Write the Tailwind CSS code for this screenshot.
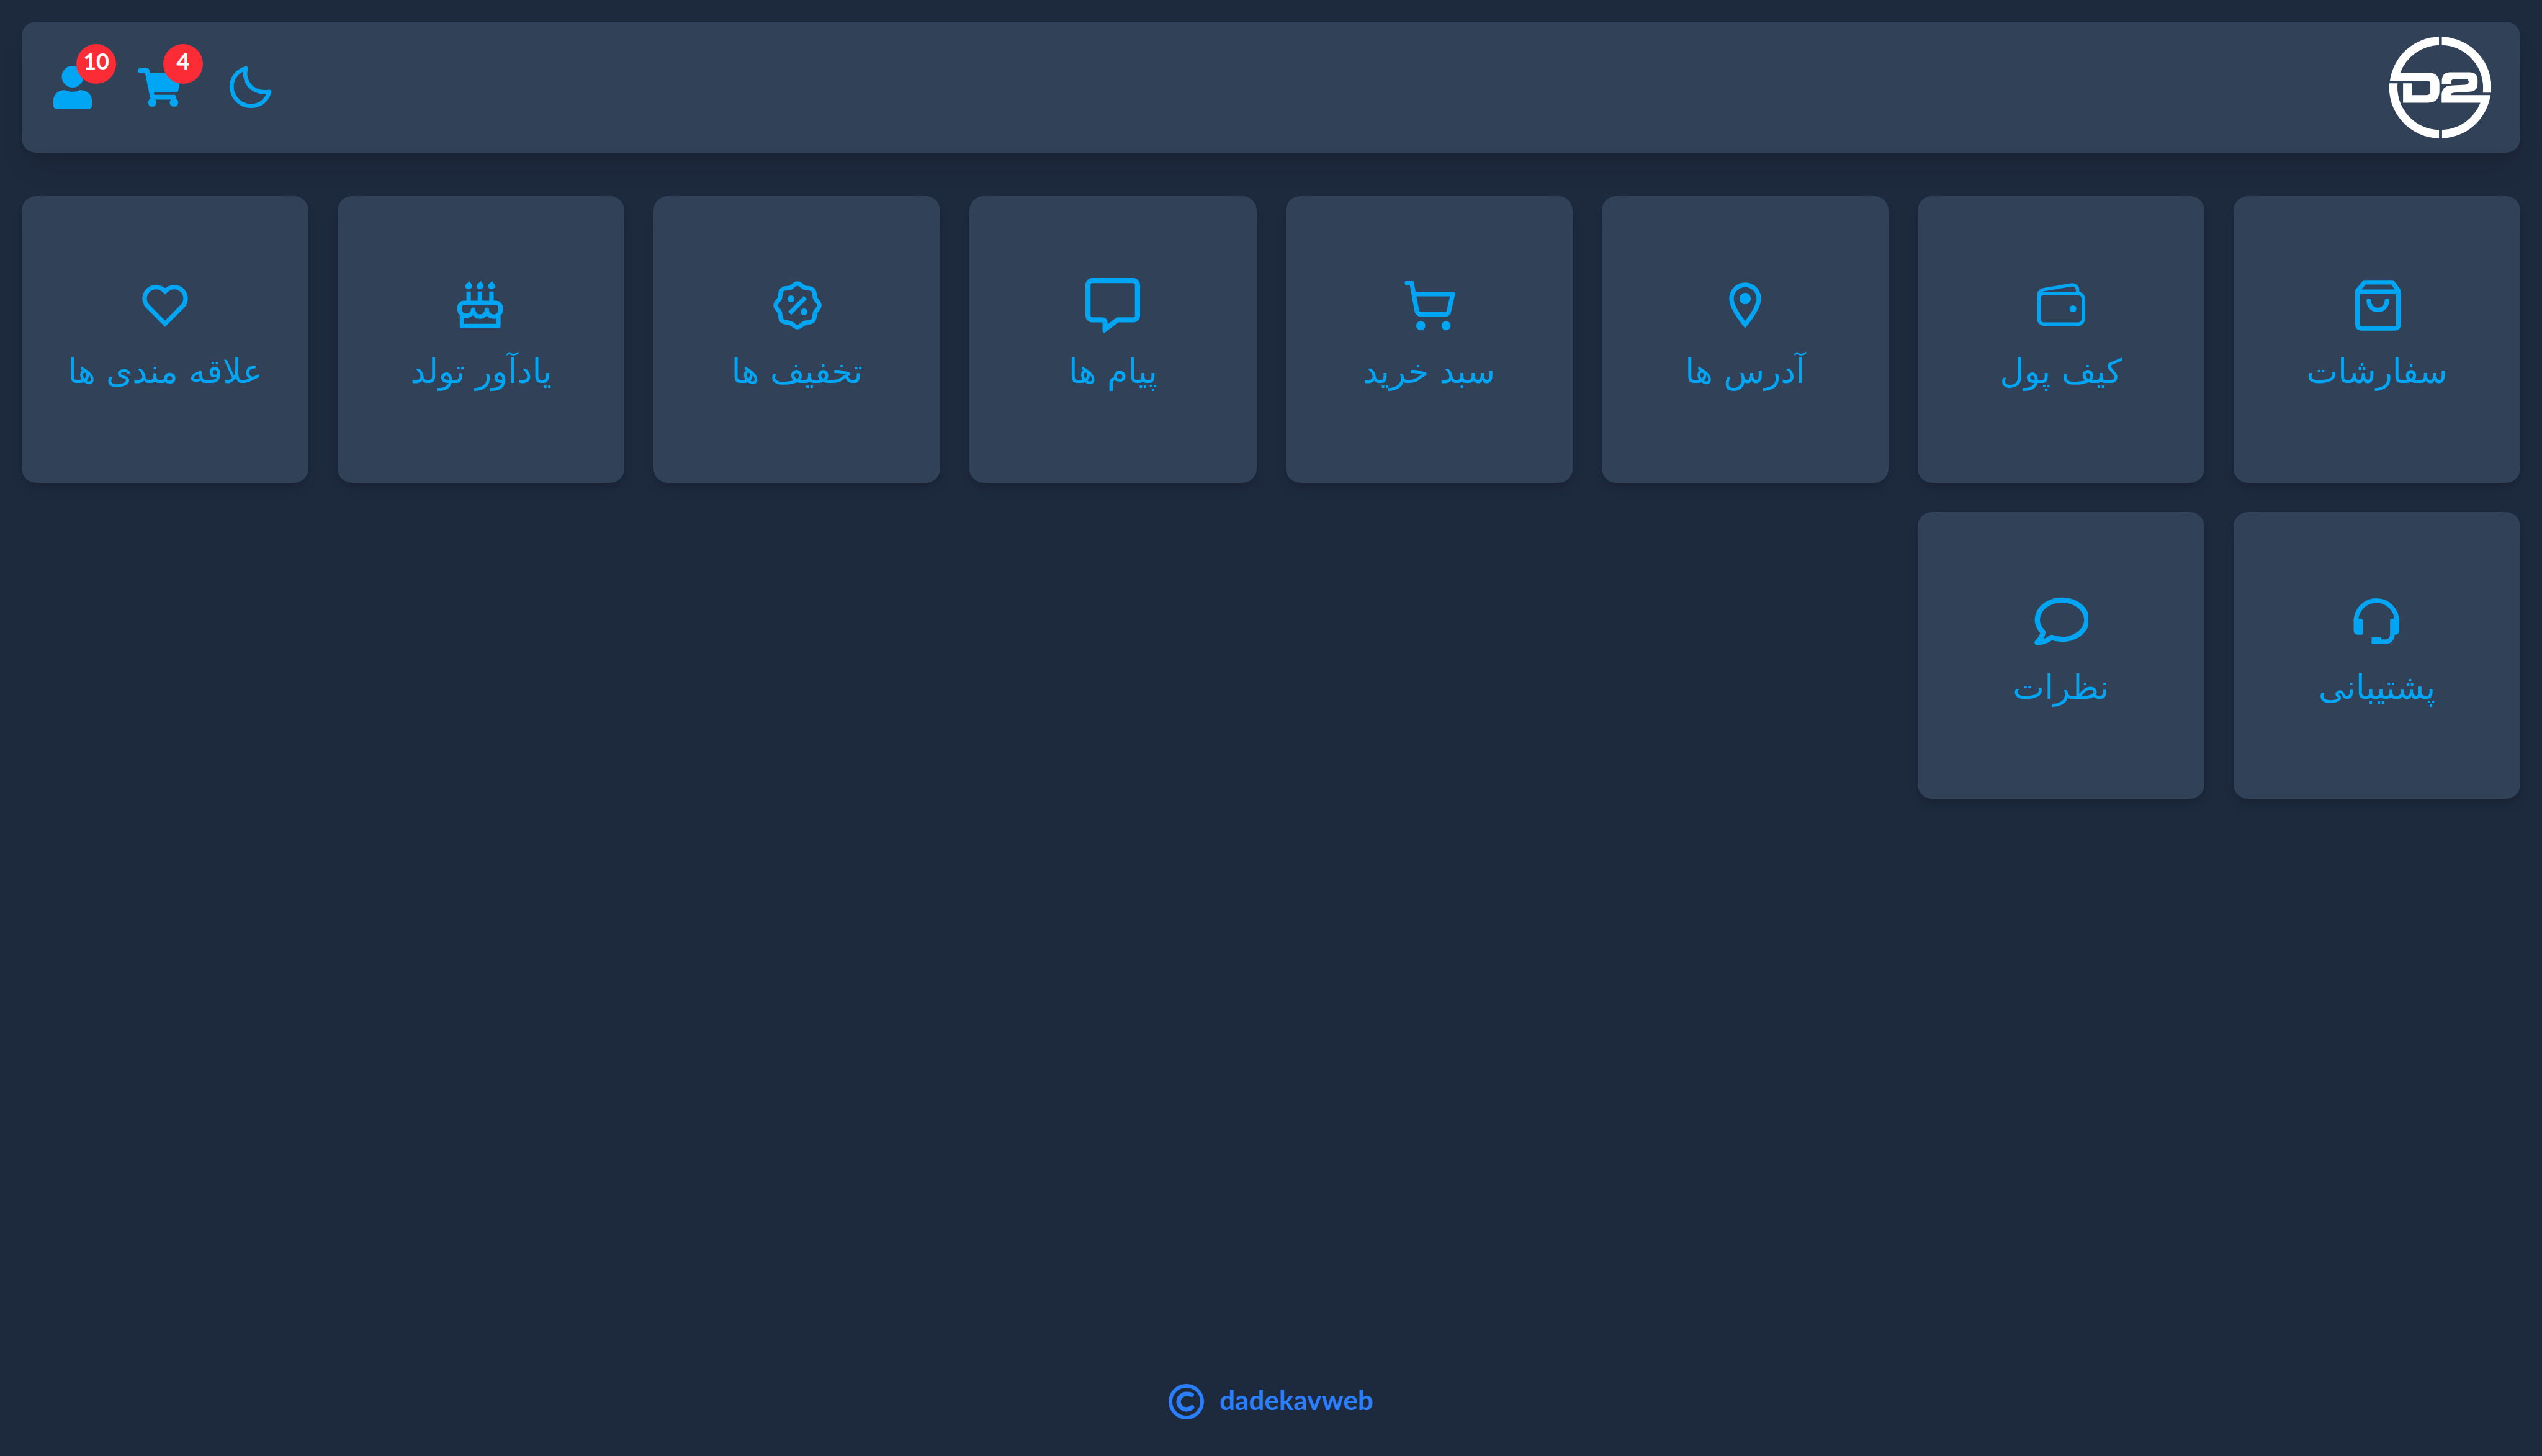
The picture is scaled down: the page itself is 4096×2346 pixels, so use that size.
<!DOCTYPE html>
<html lang="fa" dir="rtl">
<head>
<meta charset="utf-8">
<title>dadekavweb</title>
<script src="https://cdn.jsdelivr.net/npm/@tailwindcss/browser@4"></script>
</head>
<body class="flex min-h-screen flex-col bg-slate-800 p-[35px] pb-[59px] font-['DejaVu_Sans',sans-serif] text-sky-500">

<header class="flex h-[211px] items-center justify-between rounded-[23px] bg-slate-700 px-[47px] shadow-[0_29px_44px_-9px_rgba(0,0,0,0.1),0_12px_18px_-12px_rgba(0,0,0,0.1)]">
  <a href="#" aria-label="D2">
    <svg class="size-[164px] text-white" viewBox="204 180 504 504" fill="currentColor">
      <path d="M450 181A251 251 0 0 0 207 398H390Q407 398 407 415V450Q407 470 388 470H315V411H272V507H395Q452 507 452 450V415Q452 359 400 359H258A211 211 0 0 1 450 222Z"/>
      <path d="M204 411A251 251 0 0 0 450 683V642A211 211 0 0 1 245 411Z"/>
      <path d="M464 181A251 251 0 0 1 708 457H667A211 211 0 0 0 464 222Z"/>
      <path d="M464 414V400Q464 357 505 357H600Q641 357 641 395V415Q641 450 600 453L525 457Q508 458 508 470H705A251 251 0 0 1 465 683V642A211 211 0 0 0 655 507H463V470Q463 425 510 422L580 418Q597 417 597 405Q597 390 580 390H530Q510 390 510 405V414Z"/>
    </svg>
  </a>
  <nav class="flex items-center gap-[70px]">
    <button type="button" aria-label="حالت شب">
      <svg class="size-[82px]" viewBox="-29 -21 562 562" fill="none" stroke="currentColor" stroke-width="46" stroke-linecap="round" stroke-linejoin="round"><path d="M208 48C110 76 48 155 48 248c0 119 97 216 216 216C360 464 440 400 464 307C350 325 245 280 208 170C195 130 195 85 208 48Z"/></svg>
    </button>
    <a href="#" class="relative" aria-label="سبد خرید">
      <svg class="size-[70px]" viewBox="684 324 216 216" fill="currentColor">
        <path d="M736 360H902L885 448Q883 456 876 456H760Z"/>
        <path d="M696 348H730L757 480H864" fill="none" stroke="currentColor" stroke-width="24" stroke-linecap="round" stroke-linejoin="round"/>
        <circle cx="756" cy="507" r="21"/><circle cx="864" cy="507" r="21"/>
      </svg>
      <span class="absolute -top-[35px] left-[41px] flex size-[64px] justify-center rounded-full bg-red-500 font-['Lato',sans-serif] text-[36px] leading-[54px] font-bold text-white">4</span>
    </a>
    <a href="#" class="relative" aria-label="حساب کاربری">
      <svg class="size-[70px]" viewBox="252 324 216 216" fill="currentColor">
        <circle cx="360" cy="378" r="54"/>
        <path d="M264 500C264 465 288 445 320 445C332 445 335 453 360 453C385 453 388 445 400 445C432 445 456 465 456 500V520Q456 540 436 540H284Q264 540 264 520Z"/>
      </svg>
      <span class="absolute -top-[35px] left-[41px] flex size-[64px] justify-center rounded-full bg-red-500 font-['Lato',sans-serif] text-[36px] leading-[54px] font-bold text-white">10</span>
    </a>
  </nav>
</header>

<main class="mt-[70px] grid grid-cols-8 gap-[47px] text-[54px] leading-[80px] whitespace-nowrap">
  <a href="#" class="flex aspect-square flex-col items-center justify-center gap-[23px] rounded-[23px] bg-slate-700 shadow-[0_12px_18px_-3px_rgba(0,0,0,0.1),0_6px_12px_-6px_rgba(0,0,0,0.1)]">
    <svg class="size-[88px]" viewBox="0 0 90 90" fill="none" stroke="currentColor" stroke-width="7.500" stroke-linejoin="round" stroke-linecap="round"><path d="M24.500 7H70.500L80.500 21V76Q80.500 83 73.500 83H20Q13 83 13 76V21ZM13 22.700H80.500M31.500 37.500a15 15 0 0 0 30 0"/></svg>
    <span class="pb-2">سفارشات</span>
  </a>
  <a href="#" class="flex aspect-square flex-col items-center justify-center gap-[23px] rounded-[23px] bg-slate-700 shadow-[0_12px_18px_-3px_rgba(0,0,0,0.1),0_6px_12px_-6px_rgba(0,0,0,0.1)]">
    <svg class="size-[88px]" viewBox="0 0 512 512" fill="none" stroke="currentColor" stroke-width="32" stroke-linejoin="round"><rect x="48" y="144" width="416" height="288" rx="48"/><path d="M411.360 144v-30A50 50 0 0 0 352 64.900L88.640 109.850A50 50 0 0 0 48 159v49"/><circle cx="368" cy="288" r="32" fill="currentColor" stroke="none"/></svg>
    <span class="pb-2">کیف پول</span>
  </a>
  <a href="#" class="flex aspect-square flex-col items-center justify-center gap-[23px] rounded-[23px] bg-slate-700 shadow-[0_12px_18px_-3px_rgba(0,0,0,0.1),0_6px_12px_-6px_rgba(0,0,0,0.1)]">
    <svg class="size-[88px]" viewBox="0 0 24 24" fill="currentColor"><path d="M12 2C8.130 2 5 5.130 5 9c0 5.250 7 13 7 13s7-7.750 7-13c0-3.870-3.130-7-7-7zM7 9c0-2.760 2.240-5 5-5s5 2.240 5 5c0 2.880-2.880 7.190-5 9.880C9.920 16.210 7 11.850 7 9z"/><circle cx="12" cy="9" r="2.500"/></svg>
    <span class="pb-2">آدرس ها</span>
  </a>
  <a href="#" class="flex aspect-square flex-col items-center justify-center gap-[23px] rounded-[23px] bg-slate-700 shadow-[0_12px_18px_-3px_rgba(0,0,0,0.1),0_6px_12px_-6px_rgba(0,0,0,0.1)]">
    <svg class="size-[88px]" viewBox="0 0 90 90" fill="currentColor"><path d="M8.200 7.800H16L24.500 54Q26 60 32 60H70.500Q76.500 60 77.500 54L83.700 26.300H20" fill="none" stroke="currentColor" stroke-width="7.500" stroke-linejoin="round" stroke-linecap="round"/><circle cx="31" cy="78.500" r="7.600"/><circle cx="72.700" cy="78.500" r="7.600"/></svg>
    <span class="pb-2">سبد خرید</span>
  </a>
  <a href="#" class="flex aspect-square flex-col items-center justify-center gap-[23px] rounded-[23px] bg-slate-700 shadow-[0_12px_18px_-3px_rgba(0,0,0,0.1),0_6px_12px_-6px_rgba(0,0,0,0.1)]">
    <svg class="size-[88px]" viewBox="0 0 512 512" fill="currentColor"><path d="M160 368c26.500 0 48 21.500 48 48v16l72.500-54.400c8.300-6.200 18.400-9.600 28.800-9.600H448c8.800 0 16-7.200 16-16V64c0-8.800-7.200-16-16-16H64c-8.800 0-16 7.200-16 16V352c0 8.800 7.200 16 16 16h96zm48 124l-.2 .2-5.100 3.800-17.100 12.800c-4.800 3.600-11.300 4.200-16.800 1.500s-8.800-8.200-8.800-14.300V416H64c-35.300 0-64-28.700-64-64V64C0 28.700 28.700 0 64 0H448c35.300 0 64 28.700 64 64V352c0 35.300-28.700 64-64 64H309.300L208 492z"/></svg>
    <span class="pb-2">پیام ها</span>
  </a>
  <a href="#" class="flex aspect-square flex-col items-center justify-center gap-[23px] rounded-[23px] bg-slate-700 shadow-[0_12px_18px_-3px_rgba(0,0,0,0.1),0_6px_12px_-6px_rgba(0,0,0,0.1)]">
    <svg class="size-[88px]" viewBox="42 45 270 270" fill="none" stroke="currentColor" stroke-width="22"><path d="M180 72C194 72 202 86 214 92C226 98 245 92 256 104C268 115 262 134 268 146C274 158 288 166 288 180C288 194 274 202 268 214C262 226 268 245 256 256C245 268 226 262 214 268C202 274 194 288 180 288C166 288 158 274 146 268C134 262 115 268 104 256C92 245 98 226 92 214C86 202 72 194 72 180C72 166 86 158 92 146C98 134 92 115 104 104C115 92 134 98 146 92C158 86 166 72 180 72ZM142 219L219 141"/><circle cx="148" cy="148" r="17" fill="currentColor" stroke="none"/><circle cx="212" cy="212" r="17" fill="currentColor" stroke="none"/></svg>
    <span class="pb-2">تخفیف ها</span>
  </a>
  <a href="#" class="flex aspect-square flex-col items-center justify-center gap-[23px] rounded-[23px] bg-slate-700 shadow-[0_12px_18px_-3px_rgba(0,0,0,0.1),0_6px_12px_-6px_rgba(0,0,0,0.1)]">
    <svg class="size-[88px]" viewBox="60 45 270 270" fill="currentColor">
      <path d="M137 57C141 68 151 73 151 84a17 17 0 0 1-34 0C117 72 135 70 137 57ZM193 57C197 68 207 73 207 84a17 17 0 0 1-34 0C173 72 191 70 193 57ZM249 57C253 68 264 73 264 84a17 17 0 0 1-34 0C230 72 247 70 249 57ZM123 112h22v50h-22ZM179 112h22v50h-22ZM236 112h22v50h-22Z"/>
      <path d="M89 202a34 34 0 0 0 67.500 0a33.700 33.700 0 0 0 67.500 0a34 34 0 0 0 68 0V190a22 22 0 0 0-22-22H111a22 22 0 0 0-22 22ZM101 232V282H281V232" fill="none" stroke="currentColor" stroke-width="22" stroke-linejoin="round"/>
    </svg>
    <span class="pb-2">یادآور تولد</span>
  </a>
  <a href="#" class="flex aspect-square flex-col items-center justify-center gap-[23px] rounded-[23px] bg-slate-700 shadow-[0_12px_18px_-3px_rgba(0,0,0,0.1),0_6px_12px_-6px_rgba(0,0,0,0.1)]">
    <svg class="size-[88px]" viewBox="0 0 24 24" fill="currentColor"><path d="M12.001 4.529c2.349-2.109 5.979-2.039 8.242.228 2.262 2.268 2.340 5.880.236 8.236l-8.480 8.492-8.478-8.492c-2.104-2.356-2.025-5.974.236-8.236 2.265-2.264 5.888-2.340 8.244-.228zm6.826 1.641c-1.500-1.502-3.920-1.563-5.490-.153l-1.335 1.198-1.336-1.197c-1.575-1.412-3.990-1.350-5.494.154-1.490 1.490-1.565 3.875-.192 5.451L12 18.654l7.020-7.030c1.374-1.577 1.299-3.959-.193-5.454z"/></svg>
    <span class="pb-2">علاقه مندی ها</span>
  </a>
  <a href="#" class="flex aspect-square flex-col items-center justify-center gap-[23px] rounded-[23px] bg-slate-700 shadow-[0_12px_18px_-3px_rgba(0,0,0,0.1),0_6px_12px_-6px_rgba(0,0,0,0.1)]">
    <svg class="size-[88px]" viewBox="48 48 270 270" fill="currentColor">
      <path d="M79.500 182A101 101 0 0 1 281.500 182M259 240V250a34 34 0 0 1-34 34.500H157" fill="none" stroke="currentColor" stroke-width="23"/>
      <path d="M68 170H104Q113 170 113 179V241Q113 250 104 250H90Q68 250 68 228ZM293 170H257Q248 170 248 179V250H271Q293 250 293 228ZM157 262H204V296H157Z"/>
    </svg>
    <span class="pb-2">پشتیبانی</span>
  </a>
  <a href="#" class="flex aspect-square flex-col items-center justify-center gap-[23px] rounded-[23px] bg-slate-700 shadow-[0_12px_18px_-3px_rgba(0,0,0,0.1),0_6px_12px_-6px_rgba(0,0,0,0.1)]">
    <svg class="size-[88px]" viewBox="45 48 270 270" fill="none" stroke="currentColor" stroke-width="26" stroke-linejoin="round"><path d="M91 237A122 97 0 1 1 133 263C110 280 88 288 62 288C75 275 88 258 91 237Z"/></svg>
    <span class="pb-2">نظرات</span>
  </a>
</main>

<footer dir="ltr" class="mt-auto flex items-center justify-center gap-[25px] text-blue-500">
  <svg class="size-[57px]" viewBox="210 141 174 174" fill="none" stroke="currentColor" stroke-linecap="round"><circle cx="297" cy="228" r="78" stroke-width="18"/><path d="M324 194Q312 190 297 190a38 38 0 0 0 0 76Q313 266 325 256" stroke-width="22"/></svg>
  <a href="#" class="pb-2 font-['Lato',sans-serif] text-[44px] leading-[48px] font-bold">dadekavweb</a>
</footer>
</body>
</html>
